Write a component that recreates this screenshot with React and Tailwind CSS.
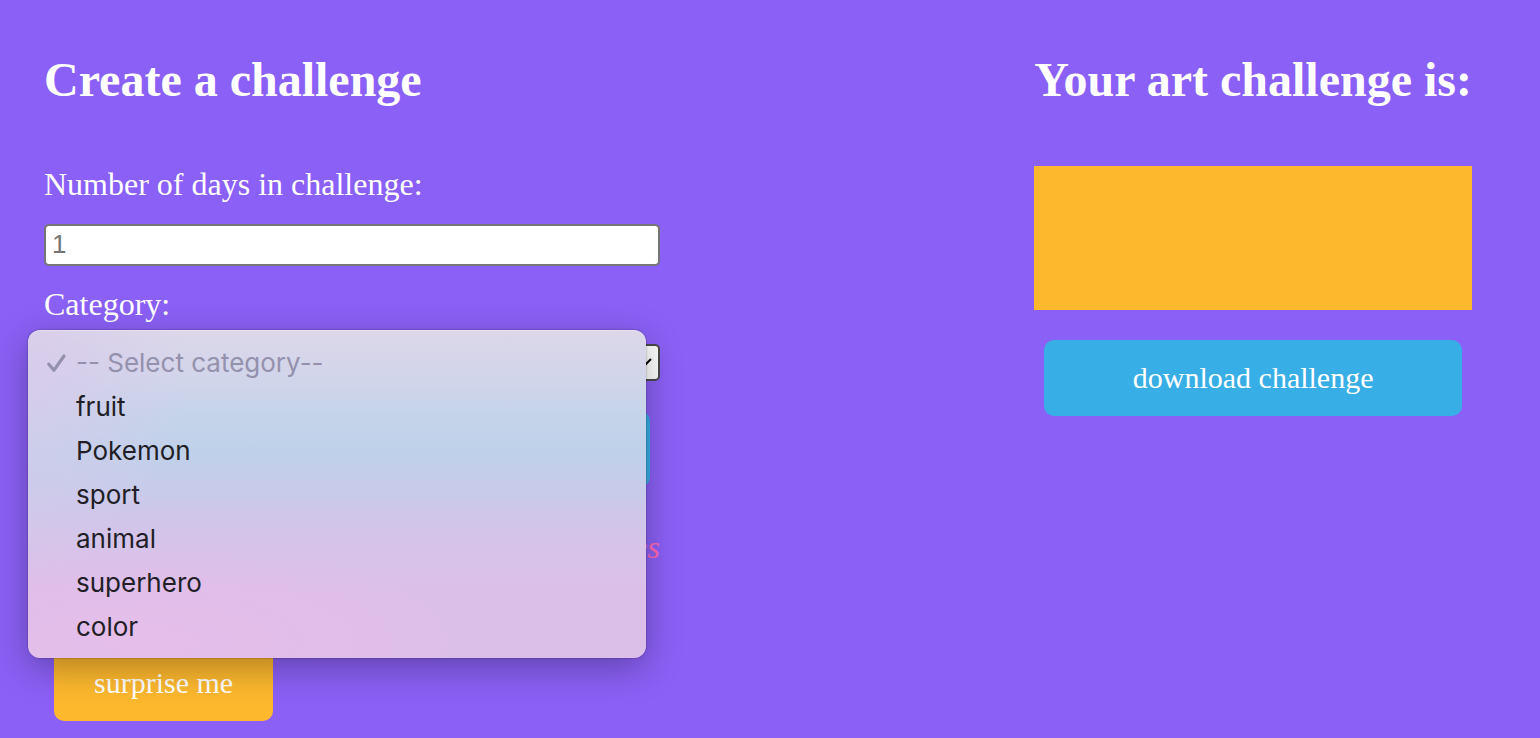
import { useState } from "react";

const categories = ["fruit", "Pokemon", "sport", "animal", "superhero", "color"];

function ActionButton({ className, children, ...props }) {
  return (
    <button
      type="button"
      className={`mx-2.5 h-19 rounded-[10px] px-10 text-[30px] leading-9 text-white ${className}`}
      {...props}
    >
      {children}
    </button>
  );
}

function CheckIcon() {
  return (
    <svg viewBox="0 0 20 20" className="h-5 w-5" fill="none" stroke="currentColor" strokeWidth="3.2" strokeLinecap="round" strokeLinejoin="round" aria-hidden="true">
      <path d="M2.8 11.2 L8 17.2 L18 3" />
    </svg>
  );
}

function CategoryMenu({ onPick }) {
  return (
    <ul
      aria-label="Category options"
      className="absolute -top-3.5 -left-4 z-10 w-[calc(100%+2px)] rounded-xl bg-[radial-gradient(ellipse_50%_30%_at_20%_95%,#e6beea_0%,#e6beea00_100%),radial-gradient(ellipse_25%_60%_at_0%_15%,#d8caebcc_0%,#d4c8eb00_100%),linear-gradient(to_bottom,#dcd7e9_0%,#d4d5ea_12%,#c6d4ea_25%,#bfd1ea_37%,#c5cdea_46%,#cec7ea_55%,#d7c3e9_66%,#dcbfe9_80%,#dcbfe9_100%)] pt-[11px] pb-[9px] font-['Inter','Liberation_Sans',sans-serif] text-[26px] leading-11 text-[#211e26] shadow-[0_0_2px_#0006,0_10px_36px_#0000004d,inset_0_1px_0_#ffffff4d]"
    >
      <li className="flex items-center text-[#9491ad]">
        <span className="flex w-12 justify-center pl-2">
          <CheckIcon />
        </span>
        <span>-- Select category--</span>
      </li>
      {categories.map((name) => (
        <li key={name}>
          <button type="button" className="block w-full pl-12 text-left" onClick={() => onPick(name)}>
            {name}
          </button>
        </li>
      ))}
    </ul>
  );
}

export default function App() {
  const [category, setCategory] = useState("");
  const [open, setOpen] = useState(true);

  return (
    <main className="flex min-h-screen items-start justify-between bg-[#8b60f6] pt-13 pr-17 pb-4 pl-11 font-['Liberation_Serif',serif] text-white">
      <form className="flex w-[40vw] min-w-[430px] flex-col">
        <h1 className="text-5xl leading-14 font-bold">Create a challenge</h1>
        <label htmlFor="days" className="mt-14 text-[32px] leading-10">
          Number of days in challenge:
        </label>
        <input
          id="days"
          type="text"
          inputMode="numeric"
          placeholder="1"
          className="mt-5 h-[42px] rounded-[5px] border-2 border-[#767676] bg-white px-1.5 pb-0.5 font-['Liberation_Sans',sans-serif] text-[26px] text-black placeholder:text-[#757575]"
        />
        <label htmlFor="category" className="mt-4.5 text-[32px] leading-10">
          Category:
        </label>
        <div className="relative mt-5">
          <select
            id="category"
            value={category}
            onChange={(e) => setCategory(e.target.value)}
            className="block h-[37px] w-full appearance-none rounded-[5px] border-2 border-[#4a4a4a] bg-white px-2 text-2xl text-black"
          >
            <option value="" />
            {categories.map((name) => (
              <option key={name}>{name}</option>
            ))}
          </select>
          <svg viewBox="0 0 16 10" className="pointer-events-none absolute top-3.5 right-2 h-2.5 w-4" fill="none" stroke="black" strokeWidth="2" aria-hidden="true">
            <path d="M1 1 L8 8 L15 1" />
          </svg>
          {open && (
            <CategoryMenu
              onPick={(name) => {
                setCategory(name);
                setOpen(false);
              }}
            />
          )}
        </div>
        <ActionButton className="mt-7.5 bg-[#38aee6]" aria-label="create challenge" />
        <p className="mt-10 text-right text-[32px] leading-10 text-[#ff69b4] italic">es</p>
        <ActionButton className="mt-19.5 self-start bg-[#fdb82e]">surprise me</ActionButton>
      </form>

      <section className="flex flex-col">
        <h2 className="text-5xl leading-14 font-bold">Your art challenge is:</h2>
        <div className="mt-[58px] h-36 bg-[#fdb82e]" />
        <ActionButton className="mt-7.5 bg-[#38aee6]">download challenge</ActionButton>
      </section>
    </main>
  );
}
